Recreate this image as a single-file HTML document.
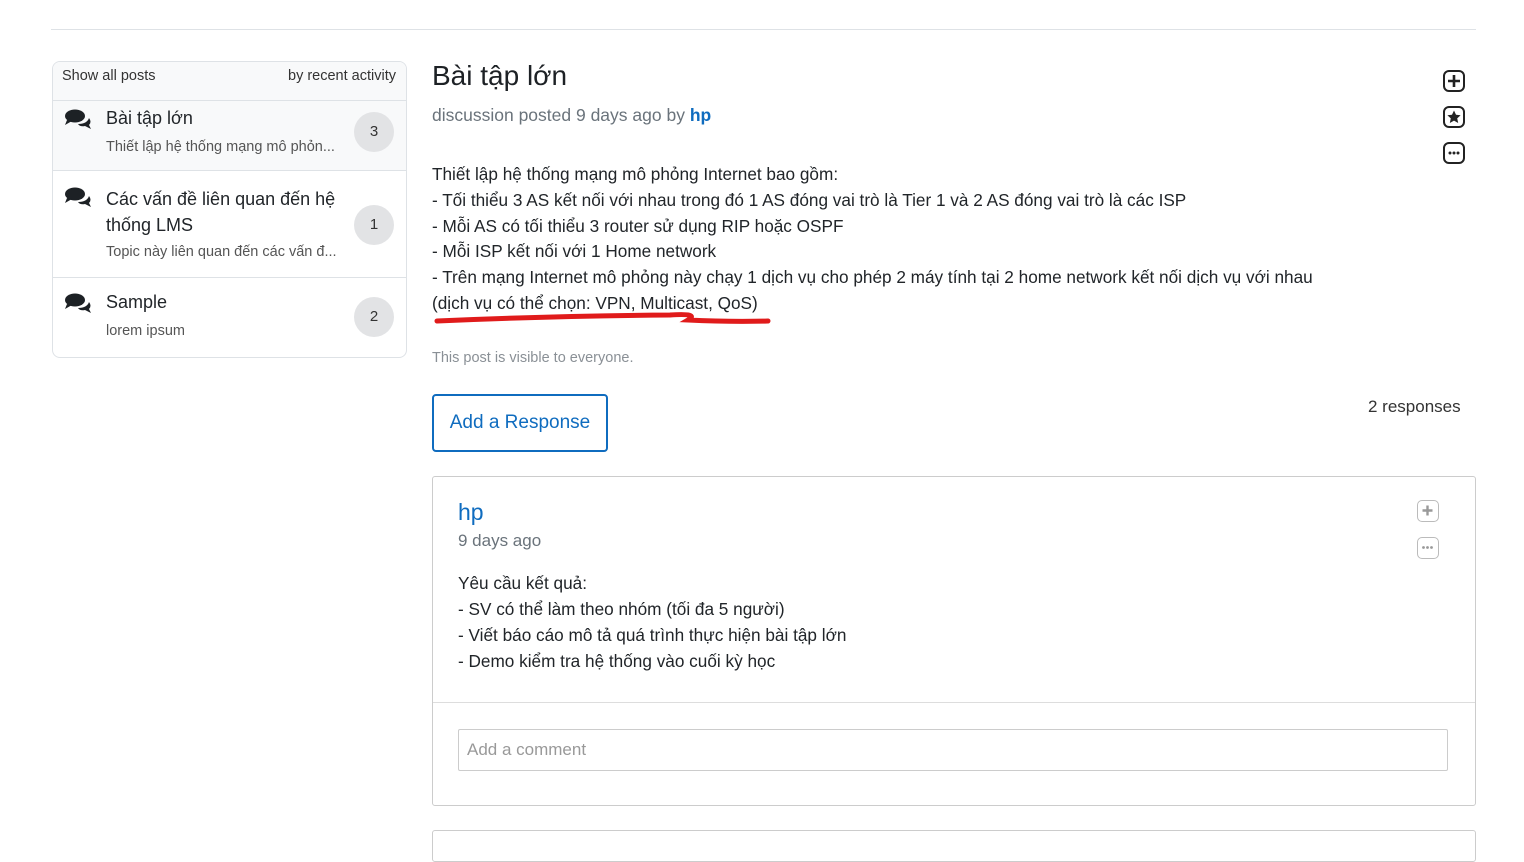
<!DOCTYPE html>
<html><head><meta charset="utf-8"><style>
body{margin:0;background:#fff;font-family:"Liberation Sans",sans-serif;color:#212529;width:1524px;height:844px;overflow:hidden;position:relative}
.a{position:absolute}
.hr{left:51px;top:29px;width:1425px;border-top:1px solid #dee2e6}
.side{left:52px;top:61px;width:353px;height:295px;border:1px solid #dee2e6;border-radius:8px;overflow:hidden}
.it{position:absolute;left:0;width:353px;border-top:1px solid #dee2e6}
.ic{position:absolute;left:12px}
.t{position:absolute;left:53px;font-size:18px;color:#212529}
.s{position:absolute;left:53px;font-size:14.5px;color:#555}
.badge{position:absolute;left:301px;width:40px;height:40px;border-radius:50%;background:#e2e3e5;text-align:center;line-height:40px;font-size:15px;color:#333}
.body{left:432px;top:162px;font-size:17.2px;line-height:25.8px;color:#212529;white-space:pre}
.btnic{position:absolute;width:22px;height:22px;border:2px solid #222;border-radius:6px;box-sizing:border-box;left:1443px}
</style></head><body>
<div class="a hr"></div>
<div class="a side">
 <div style="position:absolute;left:0;top:0;width:353px;height:109px;background:#f8f9fa"></div>
 <div class="a" style="left:9px;top:6px;font-size:14.5px;color:#333">Show all posts</div>
 <div class="a" style="right:10px;top:6px;font-size:14.5px;color:#333">by recent activity</div>
 <div class="it" style="top:38px;height:70px">
  <svg class="ic" style="top:8px" width="26" height="20" viewBox="0 0 26 20"><ellipse cx="10" cy="7" rx="10" ry="6.5" fill="#1d2125"/><path d="M2 11 L0 16 L7 12Z" fill="#1d2125"/><path d="M13 15 Q22 15 24 9 Q27 13 24 16 L26 20 L20 17 Q15 18 13 15Z" fill="#1d2125"/></svg>
  <div class="t" style="top:7px">Bài tập lớn</div>
  <div class="s" style="top:38px">Thiết lập hệ thống mạng mô phỏn...</div>
  <div class="badge" style="top:11px">3</div>
 </div>
 <div class="it" style="top:108px;height:107px">
  <svg class="ic" style="top:16px" width="26" height="20" viewBox="0 0 26 20"><ellipse cx="10" cy="7" rx="10" ry="6.5" fill="#1d2125"/><path d="M2 11 L0 16 L7 12Z" fill="#1d2125"/><path d="M13 15 Q22 15 24 9 Q27 13 24 16 L26 20 L20 17 Q15 18 13 15Z" fill="#1d2125"/></svg>
  <div class="t" style="top:15px;line-height:26px">Các vấn đề liên quan đến hệ<br>thống LMS</div>
  <div class="s" style="top:73px">Topic này liên quan đến các vấn đ...</div>
  <div class="badge" style="top:34px">1</div>
 </div>
 <div class="it" style="top:215px;height:80px">
  <svg class="ic" style="top:15px" width="26" height="20" viewBox="0 0 26 20"><ellipse cx="10" cy="7" rx="10" ry="6.5" fill="#1d2125"/><path d="M2 11 L0 16 L7 12Z" fill="#1d2125"/><path d="M13 15 Q22 15 24 9 Q27 13 24 16 L26 20 L20 17 Q15 18 13 15Z" fill="#1d2125"/></svg>
  <div class="t" style="top:14px">Sample</div>
  <div class="s" style="top:45px">lorem ipsum</div>
  <div class="badge" style="top:19px">2</div>
 </div>
</div>

<div class="a" style="left:432px;top:60px;font-size:28px;color:#1d2125">Bài tập lớn</div>
<div class="a" style="left:432px;top:105px;font-size:17.5px;color:#6a737b">discussion posted 9 days ago by <b style="color:#0f6cbf;font-weight:bold">hp</b></div>
<div class="btnic" style="top:70px"><svg width="18" height="18" viewBox="0 0 18 18"><path d="M9 3v12M3 9h12" stroke="#222" stroke-width="2.6"/></svg></div>
<div class="btnic" style="top:106px"><svg width="18" height="18" viewBox="0 0 18 18"><path d="M9 2.5l2 4.3 4.6.5-3.4 3.1 1 4.6L9 12.6 4.8 15l1-4.6L2.4 7.3 7 6.8z" fill="#222"/></svg></div>
<div class="btnic" style="top:142px"><svg width="18" height="18" viewBox="0 0 18 18"><circle cx="5" cy="9" r="1.5" fill="#222"/><circle cx="9" cy="9" r="1.5" fill="#222"/><circle cx="13" cy="9" r="1.5" fill="#222"/></svg></div>

<div class="a body">Thiết lập hệ thống mạng mô phỏng Internet bao gồm:
- Tối thiểu 3 AS kết nối với nhau trong đó 1 AS đóng vai trò là Tier 1 và 2 AS đóng vai trò là các ISP
- Mỗi AS có tối thiểu 3 router sử dụng RIP hoặc OSPF
- Mỗi ISP kết nối với 1 Home network
- Trên mạng Internet mô phỏng này chạy 1 dịch vụ cho phép 2 máy tính tại 2 home network kết nối dịch vụ với nhau
(dịch vụ có thể chọn: VPN, Multicast, QoS)</div>
<svg class="a" style="left:430px;top:306px" width="345" height="22"><path d="M7 15 Q120 10 240 9 Q270 7 258 14 Q300 16 338 15" stroke="#e01b1b" stroke-width="5" fill="none" stroke-linecap="round"/></svg>
<div class="a" style="left:432px;top:350px;font-size:14.5px;color:#8a9096">This post is visible to everyone.</div>
<div class="a" style="left:432px;top:394px;width:172px;height:54px;border:2px solid #0f6cbf;border-radius:4px;color:#0f6cbf;font-size:19px;line-height:54px;text-align:center">Add a Response</div>
<div class="a" style="left:1368px;top:397px;font-size:17px;color:#333">2 responses</div>

<div class="a" style="left:432px;top:476px;width:1042px;height:328px;border:1px solid #ccc;border-radius:3px">
 <div class="a" style="left:25px;top:22px;font-size:23px;color:#0f6cbf">hp</div>
 <div class="a" style="left:25px;top:54px;font-size:17px;color:#6a737b">9 days ago</div>
 <div class="a" style="left:984px;top:23px;width:22px;height:22px;border:1.5px solid #bbb;border-radius:5px;box-sizing:border-box"><svg width="19" height="19" viewBox="0 0 19 19"><path d="M9.5 4.5v10M4.5 9.5h10" stroke="#999" stroke-width="2.4"/></svg></div>
 <div class="a" style="left:984px;top:60px;width:22px;height:22px;border:1.5px solid #bbb;border-radius:5px;box-sizing:border-box"><svg width="19" height="19" viewBox="0 0 19 19"><circle cx="5.5" cy="9.5" r="1.4" fill="#999"/><circle cx="9.5" cy="9.5" r="1.4" fill="#999"/><circle cx="13.5" cy="9.5" r="1.4" fill="#999"/></svg></div>
 <div class="a" style="left:25px;top:93px;font-size:17.2px;line-height:26px;white-space:pre">Yêu cầu kết quả:
- SV có thể làm theo nhóm (tối đa 5 người)
- Viết báo cáo mô tả quá trình thực hiện bài tập lớn
- Demo kiểm tra hệ thống vào cuối kỳ học</div>
 <div class="a" style="left:0;top:225px;width:1042px;border-top:1px solid #ddd"></div>
 <div class="a" style="left:25px;top:252px;width:990px;height:42px;border:1px solid #ccc;border-radius:2px;box-sizing:border-box"><div style="padding:10px 8px;font-size:17px;color:#999">Add a comment</div></div>
</div>
<div class="a" style="left:432px;top:830px;width:1042px;height:30px;border:1px solid #ccc;border-radius:3px"></div>
</body></html>
